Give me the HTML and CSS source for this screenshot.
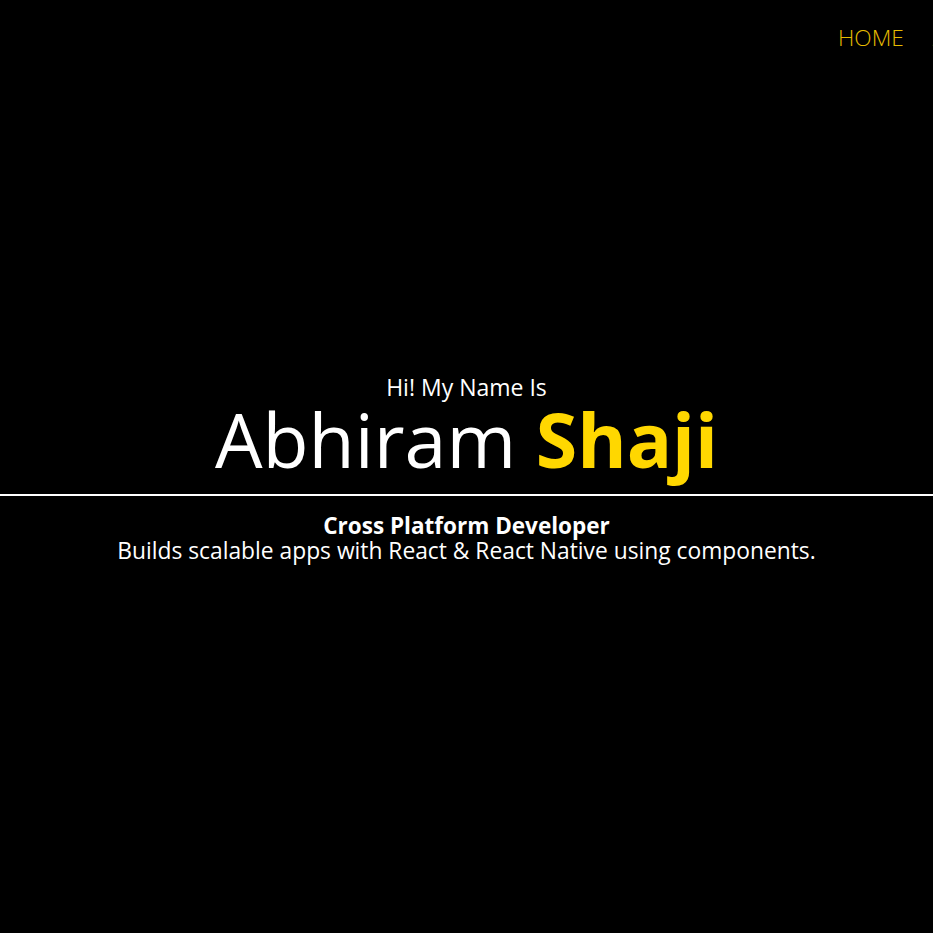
FILE: index.html
```html
<!DOCTYPE html>
<html lang="en">
<head>
<meta charset="utf-8">
<title>Abhiram Shaji</title>
<link rel="stylesheet" href="styles.css">
</head>
<body>
<nav class="nav">
  <ul class="nav-list">
    <li><a class="nav-link" href="#">HOME</a></li>
    <li><a class="nav-link" href="#">ABOUT</a></li>
  </ul>
</nav>
<main class="hero">
  <div class="intro">
    <p class="greeting">Hi! My Name Is</p>
    <h1 class="name">Abhiram <span class="accent">Shaji</span></h1>
  </div>
  <hr class="divider">
  <div class="role">
    <h2 class="role-title">Cross Platform Developer</h2>
    <p class="role-desc">Builds scalable apps with React &amp; React Native using components.</p>
  </div>
</main>
</body>
</html>
```
FILE: styles.css
```css
* { box-sizing: border-box; }
html, body {
  margin: 0;
  padding: 0;
  background: #000;
  color: #fff;
  font-family: "Open Sans", "Noto Sans", sans-serif;
  height: 100%;
  overflow: hidden;
}
.nav {
  position: absolute;
  top: 0;
  left: 0;
  right: 0;
  height: 76px;
  overflow: hidden;
}
.nav-list {
  list-style: none;
  margin: 0;
  padding: 22px 0 0 838px;
  display: flex;
  gap: 29px;
  white-space: nowrap;
}
.nav-link {
  color: #e6bc00;
  text-decoration: none;
  font-size: 22.7px;
  font-weight: 300;
}
.hero {
  height: 933px;
  display: flex;
  flex-direction: column;
  justify-content: center;
  align-items: stretch;
  text-align: center;
  padding-top: 4px;
}
.greeting {
  margin: 0;
  font-size: 23px;
  line-height: 28px;
}
.name {
  margin: 0;
  font-size: 75.3px;
  font-weight: 400;
  line-height: 76px;
}
.accent {
  color: #ffd700;
  font-weight: 700;
}
.divider {
  border: 0;
  height: 2px;
  background: #fff;
  margin: 17px 0 0;
  width: 100%;
}
.role { padding-top: 18px; }
.role-title {
  margin: 0;
  font-size: 22.5px;
  font-weight: 700;
  line-height: 24px;
}
.role-desc {
  margin: 0;
  font-size: 22.8px;
  line-height: 26px;
}
```
